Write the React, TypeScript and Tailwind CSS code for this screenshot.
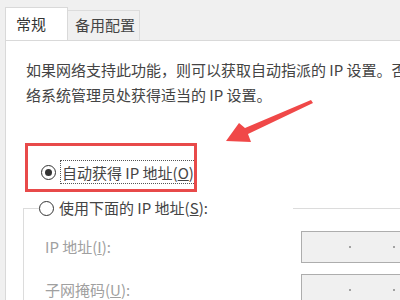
const font = { fontFamily: '"Noto Sans CJK SC", "Noto Sans", sans-serif' };

const Radio = ({ checked }: { checked?: boolean }) => (
  <span className="flex h-[15px] w-[15px] shrink-0 items-center justify-center rounded-full border border-[#333] bg-white">
    {checked && <span className="h-[7px] w-[7px] rounded-full bg-[#333]" />}
  </span>
);

const IpBox = () => (
  <div className="flex h-[32px] w-[150px] shrink-0 items-center gap-[42px] border border-[#adadad] bg-[#f0f0f0] pl-[47px]">
    <span className="h-[2px] w-[2px] rounded-full bg-[#888]" />
    <span className="h-[2px] w-[2px] rounded-full bg-[#888]" />
  </div>
);

export default function App() {
  return (
    <div
      className="relative flex h-[300px] w-[400px] flex-col overflow-hidden bg-[#f0f0f0] text-[15px] text-[#444]"
      style={font}
    >
      {/* tabs */}
      <div className="flex h-[40px] shrink-0 items-end pl-[5px]">
        <div className="flex h-[33px] w-[63px] items-center border border-b-0 border-[#d9d9d9] bg-white pl-[10px] text-[#333]">
          常规
        </div>
        <div className="flex h-[30px] w-[72px] items-center border-t border-r border-[#dcdcdc] bg-[#f0f0f0] pl-[7px]">
          备用配置
        </div>
      </div>

      {/* page */}
      <div className="ml-[5px] flex-1 border-t border-l border-[#d9d9d9] bg-white pl-[20px] pt-[16px]">
        <p className="whitespace-nowrap leading-[25px]">
          如果网络支持此功能，则可以获取自动指派的 IP 设置。否则，
          <br />
          络系统管理员处获得适当的 IP 设置。
        </p>

        <div className="mt-[53px] flex h-[24px] items-center pl-[15px]">
          <Radio checked />
          <span className="ml-[4px] flex h-[24px] items-center border border-dotted border-[#555] px-[1px] leading-none">
            自动获得 IP 地址(<span className="underline">O</span>)
          </span>
        </div>

        <fieldset className="-ml-[3px] mt-[12px] border-t border-l border-[#dcdcdc] pb-[20px]">
          <legend className="ml-[15px] flex h-[24px] w-[254px] items-center">
            <Radio />
            <span className="ml-[5px]">
              使用下面的 IP 地址(<span className="underline">S</span>):
            </span>
          </legend>
          <div className="mt-[11px] flex flex-col gap-[11px] text-[#a0a0a0]">
            <div className="flex items-center">
              <span className="w-[277px] shrink-0 pl-[21px]">IP 地址(<span className="underline">I</span>):</span>
              <IpBox />
            </div>
            <div className="flex items-center">
              <span className="w-[277px] shrink-0 pl-[21px]">子网掩码(<span className="underline">U</span>):</span>
              <IpBox />
            </div>
          </div>
        </fieldset>
      </div>

      {/* annotation: red box */}
      <div className="absolute left-[25px] top-[143px] h-[49px] w-[172px] border-[3px] border-[#e84a4a]" />

      {/* annotation: arrow */}
      <svg className="pointer-events-none absolute inset-0" width="400" height="300" viewBox="0 0 400 300">
        <polygon
          points="226,141 239,123 245,128 311,100 313,103 248,134 251,142"
          fill="#f04848"
        />
      </svg>
    </div>
  );
}
